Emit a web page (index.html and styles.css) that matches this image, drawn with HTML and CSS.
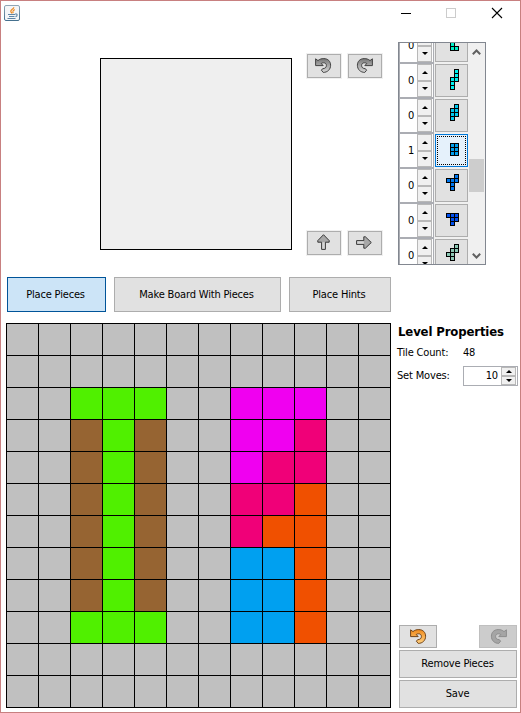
FILE: index.html
```html
<!DOCTYPE html>
<html lang="en">
<head>
<meta charset="utf-8">
<title>Level Editor</title>
<link rel="stylesheet" href="styles.css">
</head>
<body>
<svg class="defs" width="0" height="0">
  <defs>
    <linearGradient id="steel" x1="0" y1="0" x2="0" y2="1"><stop offset="0" stop-color="#777"/><stop offset="1" stop-color="#d8d8d8"/></linearGradient>
    <linearGradient id="amber" x1="0" y1="0" x2="0" y2="1"><stop offset="0" stop-color="#f08a1c"/><stop offset="1" stop-color="#ffd080"/></linearGradient>
    <path id="turn" d="M.6 .8 L3 2.6 C4.6 1.1 6.6 .6 8.8 .6 C13 .6 15.6 3.4 15.6 7.2 C15.6 11.4 12.6 14.4 8.2 14.4 L6.4 12.2 L7.6 10.7 C10 10.7 11.4 9.4 11.4 7.5 C11.4 5.8 10.3 4.8 8.7 4.8 C7.6 4.8 6.8 5 6.2 5.5 L8.2 7.6 H.6 Z"/>
    <g id="straight" stroke="#393939"><path d="M.6 4.6 H9 V8.4 H.6 Z" fill="#d6d6d6"/><path d="M7.8 4.6 V.8 H9.4 L15.3 6.5 L9.4 12.2 H7.8 V8.4" fill="#a8a8a8"/></g>
  </defs>
</svg>
<main class="window">
  <header class="titlebar">
    <svg class="java" width="16" height="16" viewBox="0 0 16 16">
      <defs><linearGradient id="cup" x1="0" y1="0" x2="0" y2="1"><stop offset="0" stop-color="#8fa6b6"/><stop offset="1" stop-color="#45708e"/></linearGradient></defs>
      <rect x=".5" y=".5" width="15" height="15" rx="1.5" fill="#f4f6f8" stroke="url(#cup)"/>
      <path d="M9.8 2.2C10 4 6.2 4.8 6.8 6.5C7 7.2 7.6 7.8 8 8.4M10.8 4.6C8.4 5.6 8.6 6.5 9.2 8.2" fill="none" stroke="#ef8a22" stroke-width="1.2"/>
      <path d="M4 9.5H11M5 11.5H10.5M3.5 13.5H11.5M11 9C14 8.5 13.5 11 11.5 11.6" fill="none" stroke="#5f86a6" stroke-width="1.1"/>
    </svg>
    <svg class="controls" width="104" height="12" viewBox="0 0 104 12" fill="none" shape-rendering="crispEdges">
      <path d="M0 6.5H10" stroke="#000"/>
      <rect x="45.5" y="1.5" width="9" height="9" stroke="#ccc"/>
      <path d="M91 1L101 11M101 1L91 11" stroke="#000" stroke-width="1.1" shape-rendering="auto"/>
    </svg>
  </header>
  <section class="top">
    <div class="preview"></div>
    <div class="transforms">
      <div class="pair">
        <button class="btn"><svg width="17" height="15" viewBox="0 0 17 15"><use href="#turn" fill="url(#steel)" stroke="#424242"/></svg></button>
        <button class="btn"><svg width="17" height="15" viewBox="0 0 17 15"><use href="#turn" transform="matrix(-1 0 0 1 17 0)" fill="url(#steel)" stroke="#424242"/></svg></button>
      </div>
      <div class="pair">
        <button class="btn"><svg class="lift" width="13" height="16" viewBox="0 0 13 16"><use href="#straight" transform="translate(0 16) rotate(-90)"/></svg></button>
        <button class="btn"><svg class="lift" width="16" height="13" viewBox="0 0 16 13"><use href="#straight"/></svg></button>
      </div>
    </div>
    <div class="picker">
      <div class="list" id="list"></div>
      <div class="scrollbar">
        <svg width="9" height="6" viewBox="0 0 9 6"><path d="M.8 5.2L4.5 1.5L8.2 5.2" fill="none" stroke="#606060" stroke-width="2"/></svg>
        <i class="thumb"></i>
        <svg width="9" height="6" viewBox="0 0 9 6"><path d="M.8 .8L4.5 4.5L8.2 .8" fill="none" stroke="#606060" stroke-width="2"/></svg>
      </div>
    </div>
  </section>
  <nav class="modes">
    <button class="btn mode1 selected">Place Pieces</button>
    <button class="btn mode2">Make Board With Pieces</button>
    <button class="btn mode3">Place Hints</button>
  </nav>
  <section class="bottom">
    <div class="board" id="board"></div>
    <aside class="side">
      <h1>Level Properties</h1>
      <div class="prop"><span class="label">Tile Count:</span><span>48</span></div>
      <div class="prop moves"><span class="label">Set Moves:</span>
        <div class="spinner small"><span>10</span><div class="steps"><b class="up"></b><b class="down"></b></div></div>
      </div>
      <div class="actions">
        <div class="history">
          <button class="btn"><svg width="17" height="15" viewBox="0 0 17 15"><use href="#turn" fill="url(#amber)" stroke="#70441a"/></svg></button>
          <button class="btn disabled"><svg width="17" height="15" viewBox="0 0 17 15"><use href="#turn" transform="matrix(-1 0 0 1 17 0)" fill="#a5a5a5" stroke="#8d8d8d"/></svg></button>
        </div>
        <button class="btn wide">Remove Pieces</button>
        <button class="btn wide">Save</button>
      </div>
    </aside>
  </section>
</main>
<script src="app.js"></script>
</body>
</html>
```
FILE: styles.css
```css
* { box-sizing: border-box; }
body { margin: 0; background: #fff; color: #000; font: 11px/14px "DejaVu Sans Condensed", "DejaVu Sans", sans-serif; font-stretch: condensed; letter-spacing: -0.17px; }
svg { display: block; flex: none; }
.defs { position: absolute; }
.window { width: 521px; height: 713px; border: 1px solid #c88080; overflow: hidden; }
.titlebar { height: 41px; padding: 4px 15px 0 3px; display: flex; justify-content: space-between; }
.controls { margin-top: 2px; }
.btn { display: flex; align-items: center; justify-content: center; margin: 0; padding: 0; border: 1px solid #adadad; background: #e1e1e1; color: #000; font: inherit; letter-spacing: inherit; white-space: nowrap; flex: none; }
.btn.selected { background: #cce4f7; border-color: #005499; }
.btn.disabled { background: #ccc; border-color: #bfbfbf; }
.top { height: 223px; display: flex; padding-left: 99px; }
.preview { width: 192px; height: 192px; margin-top: 16px; border: 1px solid #000; background: #efefef; }
.transforms { width: 75px; height: 201px; margin: 12px 16px 0 15px; display: flex; flex-direction: column; justify-content: space-between; }
.pair { display: flex; gap: 7px; }
.pair .btn { width: 34px; height: 24px; box-shadow: 0 0 0 1px #f0f0f0; }
.pair svg { margin: 0 2px 1px 0; }
.pair .lift { margin-bottom: 2px; }
.picker { width: 88px; height: 223px; border: 1px solid #828790; display: flex; overflow: hidden; }
.list { width: 70px; height: 221px; overflow: hidden; flex: none; background: #f0f0f0; }
.row { height: 35px; display: flex; }
.row:first-child { margin-top: -15px; }
.spinner { display: flex; width: 35px; height: 35px; background: #fff; border: 1px solid #abadb3; justify-content: flex-end; align-items: center; flex: none; }
.spinner > span { padding-right: 3px; }
.steps { width: 15px; height: 33px; margin-right: 1px; display: grid; grid-template-rows: 1fr 1fr; flex: none; }
.steps b { display: flex; align-items: center; justify-content: center; border: 1px solid #b8b8b8; background: #f0f0f0; }
.steps b::before { content: ""; border: 3px solid transparent; border-top-width: 0; border-bottom: 3px solid #000; }
.steps b.down::before { border-bottom: 0; border-top: 3px solid #000; }
.row .btn { width: 33px; height: 33px; margin: 1px; box-shadow: 0 0 0 1px #f0f0f0; justify-content: flex-start; align-items: flex-start; padding: 4px 0 0 6px; }
.row .btn.current { background: #e5f1fb; border-color: #0078d7; outline: 1px dotted #000; outline-offset: -3px; }
.scrollbar { flex: 1; background: #f0f0f0; display: flex; flex-direction: column; align-items: center; padding: 6px 1px 5px 0; }
.thumb { width: 15px; height: 33px; margin: 104px 0 auto; background: #cdcdcd; }
.modes { display: flex; gap: 8px; padding: 12px 0 0 6px; }
.modes .btn { height: 35px; }
.mode1 { width: 99px; padding-right: 2px; }
.mode2 { width: 167px; padding-right: 2px; }
.mode3 { width: 102px; padding-right: 2px; }
.bottom { display: flex; padding: 11px 3px 0 5px; }
.board { width: 385px; height: 385px; padding: 1px; display: grid; grid-template-columns: repeat(12, 31px); grid-auto-rows: 31px; gap: 1px; background: #000; flex: none; }
.board i { background: #c0c0c0; }
.board .g { background: #50f000; }
.board .b { background: #966432; }
.board .m { background: #f000f0; }
.board .p { background: #f00078; }
.board .o { background: #f05000; }
.board .c { background: #00a0f0; }
.side { width: 121px; height: 385px; padding-left: 7px; display: flex; flex-direction: column; }
h1 { margin: 1px 0 5px; font: bold 13px/16px "DejaVu Sans Condensed", "DejaVu Sans", sans-serif; font-stretch: condensed; letter-spacing: -0.13px; white-space: nowrap; }
.prop { height: 16px; display: flex; align-items: center; white-space: nowrap; }
.label { width: 65px; margin-left: -1px; margin-right: 1px; flex: none; }
.moves { height: 21px; margin-top: 4px; }
.spinner.small { width: 55px; height: 20px; }
.small .steps { height: 18px; }
.actions { margin-top: auto; margin-left: 1px; width: 118px; display: flex; flex-direction: column; gap: 2px; }
.history { display: flex; justify-content: space-between; }
.history .btn { width: 38px; height: 23px; }
.history svg { margin-bottom: 1px; }
.wide { height: 28px; padding-right: 1px; }
```
FILE: app.js
```js
// Pieces in the picker: count, colour, [column, row] cells.
const pieces = [
  [0, '#00f0c8', [[0,0],[0,1],[0,2],[1,2]]],
  [0, '#00f0f0', [[1,0],[1,1],[1,2],[0,2],[0,3],[0,4]]],
  [0, '#00c8f0', [[1,0],[1,1],[1,2],[0,1],[0,2],[0,3]]],
  [1, '#00a0f0', [[0,0],[1,0],[0,1],[1,1],[0,2],[1,2]]],
  [0, '#0078f0', [[2,0],[0,1],[1,1],[2,1],[1,2],[1,3]]],
  [0, '#0050f0', [[0,0],[1,0],[2,0],[1,1],[2,1],[1,2]]],
  [0, '#8cc8b4', [[2,0],[1,1],[2,1],[0,2],[1,2],[1,3]]]
];
// Each piece sits in a 5x5 grid of 4px cells.
document.getElementById('list').innerHTML = pieces.map(([count, color, cells]) => {
  const ox = Math.ceil((4 - Math.max(...cells.map(c => c[0]))) / 2);
  const oy = Math.floor((4 - Math.max(...cells.map(c => c[1]))) / 2);
  const rects = cells.map(([x, y]) =>
    `<rect x="${(x + ox) * 4 + .5}" y="${(y + oy) * 4 + .5}" width="4" height="4" fill="${color}" stroke="#000"/>`).join('');
  return `<div class="row"><div class="spinner"><span>${count}</span><div class="steps"><b class="up"></b><b class="down"></b></div></div>` +
    `<button class="btn${count ? ' current' : ''}"><svg width="21" height="21">${rects}</svg></button></div>`;
}).join('');

const rows = [
  '............', '............',
  '..ggg..mmm..', '..bgb..mmp..', '..bgb..mpp..', '..bgb..ppo..',
  '..bgb..poo..', '..bgb..cco..', '..bgb..cco..', '..ggg..cco..',
  '............', '............'
];
document.getElementById('board').innerHTML =
  [...rows.join('')].map(k => k === '.' ? '<i></i>' : `<i class="${k}"></i>`).join('');
```
